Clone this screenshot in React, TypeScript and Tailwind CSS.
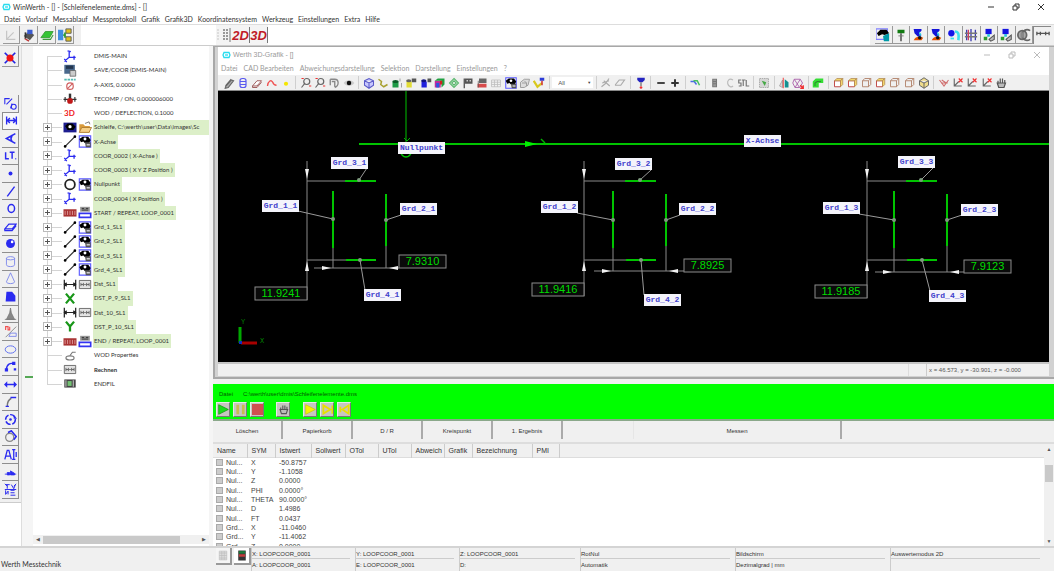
import type { ReactNode } from "react";

const BLUE = "#2a2af0";

const coor = (
  <g fill="none" stroke={BLUE} strokeWidth="1.6">
    <path d="M7 2v7l-6 5M7 9h8M5 1l4 1M13 7v5M1 11l3 4" />
  </g>
);

const camera = (
  <g>
    <path d="M1 1h14v14H1z" fill="none" stroke="#5a5aff" strokeWidth="1.4" />
    <path d="M1 5l4-3h7l3 4-2 4H8L6 8 3 9z" fill="#000" />
    <circle cx="8" cy="5" r="1.8" fill="#fff" />
    <path d="M8 9h7v6H9z" fill="#555" />
    <path d="M10 11h4v2h-4z" fill="#ccc" />
  </g>
);

const joystick = (
  <g>
    <path d="M3 1h9v2l-3 3 3 3-4 1-4-4z" fill="#1414d8" />
    <path d="M9 4l3 3-2 3z" fill="#26c6da" />
    <path d="M3 14c2-4 6-5 11-3l-2 3z" fill="#e65100" />
    <circle cx="10" cy="11" r="2" fill="#111" />
  </g>
);

const probe = (
  <g>
    <path d="M4 1h7v6H4z" fill="#1414e0" />
    <path d="M6 7h3v3H6z" fill="#26c6da" />
    <path d="M2 10h4v4H2z" fill="#2e9b2e" />
    <path d="M8 13l6-5v5l-4 2z" fill="#bbb" stroke="#555" strokeWidth="1.2" />
  </g>
);

const zoomLens = (
  <g fill="none" stroke="#666" strokeWidth="1.6">
    <circle cx="9" cy="6" r="4" />
    <path d="M6 9l-4 5" />
    <path d="M12 12h3M2 2h3" stroke="#e33" />
  </g>
);

const cubeFace = (
  <g fill="none" stroke="#b08068" strokeWidth="1.2">
    <path d="M2 5h8v8H2zM2 5l3-3h8v8l-3 3M10 5l3-3" />
  </g>
);

const axes = (
  <g fill="none">
    <path d="M3 2v10h10M3 12l6-6" stroke="#666" strokeWidth="1.5" />
    <path d="M9 2l5 5M14 2L9 7" stroke="#f03030" strokeWidth="1.5" />
  </g>
);

const repeatBox = (
  <g>
    <path d="M2 1h12v6H2z" fill="#999" />
    <path d="M4 3h3M9 3h3M4 5h8" stroke="#222" />
    <path d="M1 9h14v5H1z" fill="#fff" stroke="#3434f0" strokeWidth="2" />
  </g>
);

const measureBox = (
  <g fill="none" stroke="#555">
    <path d="M1 3h14v10H1z" fill="#e4e4e4" />
    <path d="M3 6v4M6 6v4M10 6v4M13 6v4M3 8h3M7 8h2M10 8h3" />
  </g>
);

const icons: Record<string, ReactNode> = {
  coor,
  camera,
  joystick,
  probe,
  zoomLens,
  cubeFace,
  axes,
  repeatBox,
  measureBox,
  save: (
    <g>
      <path d="M1 1h13v11H1z" fill="#49688c" />
      <path d="M3 2h9v4H3z" fill="#24364f" />
      <path d="M8 8h7v7H8z" fill="#ccc" stroke="#666" />
    </g>
  ),
  aAxis: (
    <g fill="none">
      <path d="M1 2h14" stroke="#52b8b0" strokeWidth="2.4" strokeDasharray="3 1" />
      <circle cx="8" cy="10" r="4" stroke="#d06060" strokeWidth="1.5" />
      <path d="M4 14l8-8" stroke="#d06060" strokeWidth="1.3" />
    </g>
  ),
  temp: (
    <g>
      <path d="M0 9h16M2 6v6M14 6v6" stroke="#333" strokeWidth="1.4" />
      <path d="M8 2v8" stroke="#333" strokeWidth="3" />
      <circle cx="8" cy="11" r="3.5" fill="#c01818" />
    </g>
  ),
  video: (
    <g>
      <path d="M0 2h16v12H0z" fill="#1d1d8f" />
      <path d="M2 6l3-3h6l4 4-3 4H5z" fill="#000" />
      <circle cx="8" cy="7" r="2" fill="#fff" />
    </g>
  ),
  folder: (
    <g>
      <path d="M1 4h5l2 2h6v8H1z" fill="#d99b3c" />
      <path d="M4 8h12l-3 6H1z" fill="#f6cf86" stroke="#a8752a" />
      <path d="M8 3l5-2 1 3" fill="none" stroke="#666" />
    </g>
  ),
  line: (
    <g>
      <path d="M2 14L14 2" stroke="#333" strokeWidth="1.6" />
      <circle cx="2" cy="14" r="1.6" />
      <circle cx="14" cy="2" r="1.6" />
    </g>
  ),
  ring: <circle cx="8" cy="8" r="6" fill="none" stroke="#222" strokeWidth="2.2" />,
  dmis: (
    <g>
      <path d="M0 4h16v9H0z" fill="#a83232" />
      <path d="M2 6v5M5 6v5M8 6v5M11 6v5M14 6v5" stroke="#e6a6a6" />
    </g>
  ),
  distance: (
    <g fill="none" stroke="#222" strokeWidth="1.5">
      <path d="M1 2v12M15 2v12M1 8h14M4 6L1 8l3 2M12 6l3 2-3 2" />
    </g>
  ),
  xAxis: <path d="M3 2l10 12M13 2L3 14" stroke="#189618" strokeWidth="2.8" />,
  yAxis: <path d="M3 2l5 6 5-6M8 8v6" fill="none" stroke="#189618" strokeWidth="2.8" />,
  props: (
    <g fill="none" stroke="#777" strokeWidth="1.4">
      <ellipse cx="8" cy="11" rx="5" ry="2.5" />
      <path d="M8 8l3-4h4" />
    </g>
  ),
  endfil: (
    <g>
      <path d="M1 3h14v10H1z" fill="#444" />
      <path d="M5 5h5v6H5z" fill="#73c273" />
      <path d="M3 4v8M12 4v8" stroke="#eee" />
    </g>
  ),
  cross: (
    <g>
      <path d="M2 2l12 12M14 2L2 14" stroke="#2323e0" strokeWidth="2" />
      <circle cx="8" cy="8" r="4" fill="#f01414" />
    </g>
  ),
  elements: (
    <g fill="none" stroke={BLUE} strokeWidth="1.3">
      <path d="M1 9V2h6M3 9l7-7M8 14l2-6" />
      <circle cx="12" cy="12" r="3" />
    </g>
  ),
  width: <path d="M2 3v10M14 3v10M2 8h12M6 5L3 8l3 3M10 5l3 3-3 3" fill="none" stroke={BLUE} strokeWidth="1.7" />,
  angle: <path d="M14 2L3 8l11 6M10 4c-2 3-2 5 0 8" fill="none" stroke={BLUE} strokeWidth="2" />,
  lt: (
    <g fill="none" stroke={BLUE} strokeWidth="1.8">
      <path d="M2 4v8h4M7 4h6M10 4v8M14 12h1" />
    </g>
  ),
  point: <circle cx="8" cy="8" r="2.4" fill={BLUE} />,
  slash: <path d="M4 14l9-12" stroke={BLUE} strokeWidth="1.8" />,
  oval: <ellipse cx="9" cy="8" rx="4" ry="5" fill="none" stroke={BLUE} strokeWidth="1.8" />,
  plane: <path d="M1 11l5-6h9l-5 6zM1 11v2h9l5-6" fill="none" stroke={BLUE} strokeWidth="1.4" />,
  sphere: (
    <g>
      <circle cx="8" cy="8" r="5.5" fill={BLUE} />
      <circle cx="10" cy="6" r="1.6" fill="#fff" />
    </g>
  ),
  cylinder: (
    <g fill="none" stroke="#6f7bea">
      <ellipse cx="8" cy="4" rx="5" ry="2" />
      <path d="M3 4v8c0 3 10 3 10 0V4" />
    </g>
  ),
  cone: <path d="M8 1L3 12c0 3 10 3 10 0z" fill="none" stroke="#6f7bea" />,
  contour: <path d="M3 2h7l4 5v7H2z" fill={BLUE} />,
  peak: <path d="M8 0l1 6 4 8H3l4-8zM1 14h14" fill="#888" stroke="#777" />,
  tolerance: (
    <g fill="none">
      <path d="M2 6V2h3v4h2V2" stroke="#f05050" strokeWidth="1.4" />
      <path d="M2 15L15 2" stroke="#777" />
      <path d="M8 10h7v4H6z" stroke="#6f7bea" />
    </g>
  ),
  ellipse: <ellipse cx="8" cy="8" rx="6.5" ry="4.5" fill="none" stroke="#6070ee" strokeWidth="1.2" />,
  arcPoints: (
    <g>
      <path d="M3 12C3 5 8 3 13 5" fill="none" stroke={BLUE} strokeWidth="1.6" />
      <path d="M1 10h4v4H1zM10 2h4v4h-4zM12 10h3v3h-3z" fill={BLUE} />
    </g>
  ),
  arrowH: <path d="M0 8l4-4v3h8V4l4 4-4 4V9H4v3z" fill={BLUE} />,
  arc: (
    <g fill="none" strokeWidth="1.8">
      <path d="M4 14C4 9 5 6 9 4" stroke="#777" />
      <path d="M8 3h7M2 14h4" stroke={BLUE} />
    </g>
  ),
  circleArrows: (
    <g>
      <circle cx="8" cy="8" r="6" fill="none" stroke={BLUE} strokeWidth="1.8" strokeDasharray="7 2" />
      <circle cx="8" cy="8" r="1.6" fill={BLUE} />
      <path d="M12 2l4 5h-4z" fill={BLUE} />
    </g>
  ),
  rotate: (
    <g fill="none" strokeWidth="1.6">
      <circle cx="7" cy="9" r="5" stroke="#888" />
      <path d="M5 3l4-2 6 7-3 4" stroke={BLUE} strokeWidth="2" />
    </g>
  ),
  textCursor: <path d="M1 14L4 3h2l3 11M2 10h6M12 2v12M10 2h4M10 14h4M15 5v6" fill="none" stroke={BLUE} strokeWidth="1.6" />,
  flatArrow: <path d="M1 10h14M4 8h3v3H4zM8 6l5 3v2H8z" fill={BLUE} stroke={BLUE} />,
  matrix: (
    <g fill="none" stroke={BLUE} strokeWidth="1.2">
      <path d="M2 2h5M4 2v5M9 2l3 5 2-5M2 9v5l3-4v4M8 9h5M8 12h5M8 15h6M1 8h14M1 1l3 3M15 1l-3 3" />
    </g>
  ),
  axisGrey: <path d="M3 3v10h10M3 13l8-8" fill="none" stroke="#c6c6c6" strokeWidth="1.4" />,
  machine: (
    <g>
      <path d="M2 9l6-5 6 4-5 6z" fill="#555" />
      <path d="M6 2h6v5H6z" fill="#3b5bd0" />
      <path d="M3 12l5 3" stroke="#b33" strokeWidth="1.6" />
      <path d="M4 5v7" stroke="#333" strokeWidth="2" />
    </g>
  ),
  greenPlane: (
    <g>
      <path d="M1 11L6 4h9l-4 7z" fill="#35c435" stroke="#3a9a3a" />
      <path d="M3 13h9l3-5" fill="none" stroke="#3a9a3a" strokeWidth="1.2" />
    </g>
  ),
  flow: (
    <g>
      <path d="M0 2h6v12H0z" fill="#3f8de0" />
      <path d="M9 1h6v5H9zM9 10h6v5H9z" fill="#e0c020" stroke="#555" />
      <path d="M6 8h3M8 5v6" stroke="#2c9b2c" strokeWidth="2" />
    </g>
  ),
  teleCam: (
    <g>
      <path d="M0 1h13v12H0z" fill="none" stroke="#8080ff" strokeWidth="1.4" />
      <path d="M1 6l4-4h7l3 4-5 2-3-1-4 2z" fill="#000" />
      <path d="M8 9l7-3v9H9z" fill="#009aa8" />
    </g>
  ),
  stylus: (
    <g>
      <path d="M4 2h8v4H4z" fill="#127a12" />
      <path d="M8 6v9" stroke="#444" strokeWidth="1.6" />
      <path d="M5 9h6" stroke="#777" />
    </g>
  ),
  drops: (
    <g>
      <circle cx="5" cy="6" r="3.6" fill="#1414e8" />
      <path d="M9 4c4 0 5 3 4 10" fill="none" stroke="#3fe0ee" strokeWidth="3" />
      <path d="M4 12h4" stroke="#3fe0ee" strokeWidth="2" />
    </g>
  ),
  hatch: (
    <g fill="none" strokeWidth="1.5">
      <path d="M3 2v12M8 1v14M13 2v12" stroke="#3b3bb0" />
      <path d="M1 6h14M1 10h14" stroke="#777" />
      <path d="M5 2v12" stroke="#d04060" />
    </g>
  ),
  lens: (
    <g fill="none" stroke="#666" strokeWidth="2">
      <circle cx="6" cy="8" r="5" fill="#aaa" />
      <path d="M15 3a6 6 0 100 10" />
      <path d="M6 5v6" stroke="#888" strokeWidth="4" />
    </g>
  ),
  gauge: <path d="M1 3v4M15 3v4M1 5h14M5 3v4M11 3v4" fill="none" stroke="#555" strokeWidth="1.5" />,
  clip: <path d="M3 13l8-9 3 1-7 9-4 1 1-4 7-8" fill="#aaa" stroke="#666" strokeWidth="1.6" />,
  spool: (
    <g fill="none" stroke="#5a5af0" strokeWidth="1.6">
      <rect x="4" y="2" width="8" height="12" rx="3" />
      <path d="M4 6h8M4 10h8" />
    </g>
  ),
  eraser: <path d="M2 12l6-7h6l-6 7zM2 12v2h6l6-7" fill="#fff" stroke="#985050" strokeWidth="1.2" />,
  redArc: <path d="M2 12c1-7 5-9 7-5 1 3 3 4 5 4" fill="none" stroke="#f05050" strokeWidth="1.8" />,
  yellowDot: <circle cx="8" cy="9" r="2.8" fill="#f5e600" />,
  undo: <path d="M3 3h6c6 0 6 9 0 11M5 6h4v7M3 3v8" fill="none" stroke="#888" strokeWidth="1.8" />,
  eye: (
    <g>
      <path d="M1 8c3-5 11-5 14 0-3 5-11 5-14 0z" fill="#ccc" />
      <circle cx="8" cy="8" r="3" fill="#111" />
    </g>
  ),
  cube: <path d="M2 5l6-3 6 3v6l-6 4-6-4zM2 5l6 3 6-3M8 8v7" fill="#c7c7ff" stroke="#5a5ac8" strokeWidth="1.4" />,
  path: <path d="M2 3l4 3-1 4 4 3 5-3" fill="none" stroke="#a8a030" strokeWidth="2" />,
  greenCan: (
    <g>
      <path d="M2 6h8v8H2z" fill="#1d9a45" />
      <ellipse cx="6" cy="6" rx="4" ry="2" fill="#0b5c27" />
      <path d="M12 2v4M14 8v6" stroke="#888" />
    </g>
  ),
  yellowCan: (
    <g>
      <path d="M2 6h7v8H2z" fill="#e2dc35" />
      <ellipse cx="5" cy="5" rx="3.5" ry="2" fill="#666" />
      <path d="M9 2h6v5H9z" fill="#555" />
    </g>
  ),
  blueCan: (
    <g>
      <path d="M2 6h7v8H2z" fill="#2020dd" />
      <ellipse cx="5" cy="5" rx="3.5" ry="2" fill="#111180" />
      <path d="M10 2h5v5h-5z" fill="#555" />
    </g>
  ),
  colorCube: (
    <g>
      <path d="M1 5h8v9H1z" fill="#c02a9c" />
      <path d="M3 8h4v6H3z" fill="#2a58e0" />
      <path d="M1 5l4-3h9l-4 3zM10 5l4-3v8l-4 4z" fill="#20a040" />
      <path d="M8 5h3v5H8z" fill="#d02020" />
    </g>
  ),
  diamond: <path d="M8 2l6 6-6 6-6-6zM5 8l3-3 3 3-3 3z" fill="none" stroke="#58b86c" strokeWidth="1.5" />,
  flag: (
    <g>
      <path d="M3 2v13" stroke="#444" strokeWidth="1.6" />
      <path d="M4 2h10v7H4z" fill="#555" />
      <path d="M6 4h2v2H6zM10 4h2v2h-2z" fill="#ccc" />
    </g>
  ),
  redLabel: (
    <g>
      <path d="M4 2h10v6H4z" fill="#666" />
      <path d="M2 9h12v5H2z" fill="#d84a4a" />
      <path d="M3 5v9" stroke="#555" />
    </g>
  ),
  grid: <path d="M2 4h12v9H2zM2 7h12M2 10h12M6 4v9M10 4v9" fill="none" stroke="#bcbcbc" />,
  cubeGrey: <path d="M2 7l5-4h7l-2 8-5 3H2zM4 8h6v4M7 5l3 3" fill="#ddd" stroke="#999" strokeWidth="1.2" />,
  colorProbe: (
    <g>
      <path d="M1 5l5 8 6-5" fill="none" stroke="#d8c81c" strokeWidth="3" />
      <path d="M9 1h6v4H9z" fill="#2c3cd8" />
      <path d="M12 5v6" stroke="#d03030" strokeWidth="2" />
    </g>
  ),
  brush: <path d="M2 13l5-4 5-7M5 5l8 7M3 8l9-3" fill="none" stroke="#aaa" strokeWidth="1.5" />,
  rubber: <path d="M2 10l5-6h7l-5 7H2z" fill="none" stroke="#aaa" strokeWidth="1.5" />,
  pin: (
    <g>
      <path d="M3 1h10v3l-3 3H6L3 4z" fill="#2424c0" />
      <path d="M8 7v5" stroke="#666" strokeWidth="1.6" />
      <circle cx="8" cy="14" r="1.8" fill="#f03030" />
    </g>
  ),
  minus: <path d="M3 8h10" stroke="#333" strokeWidth="2.4" />,
  plus: <path d="M3 8h10M8 3v10" stroke="#333" strokeWidth="2.6" />,
  wave: (
    <g fill="none" strokeWidth="2">
      <path d="M2 6h5l3 4" stroke="#4a68e8" />
      <path d="M6 5h5l3 6" stroke="#48c060" />
    </g>
  ),
  bolt: <path d="M5 3h5v10H5zM5 6h5M5 9h5" fill="#999" stroke="#777" strokeWidth="1.4" />,
  cShape: <path d="M12 4C7 1 4 5 5 9s5 5 7 3" fill="none" stroke="#bbb" strokeWidth="1.6" />,
  stl: <path d="M4 4H1v4h3v4H1M5 4h5M7 4v8M11 4v8h4" fill="none" stroke="#777" strokeWidth="1.6" />,
  select: (
    <g>
      <path d="M2 2h12v12H2z" fill="#d6d6d6" stroke="#999" strokeDasharray="2 1" />
      <path d="M5 5l6 2-2 5z" fill="#46a846" />
    </g>
  ),
  section: (
    <g>
      <path d="M2 12l4-8v10z" fill="#d8d8d8" stroke="#999" />
      <path d="M7 1v14" stroke="#f04a4a" strokeWidth="1.4" />
      <path d="M9 3l5 4v7H9z" fill="#149090" />
    </g>
  ),
  mesh: (
    <g fill="none">
      <path d="M3 3h8l3 5-4 6H4L1 8zM3 3l7 11M11 3L4 14" stroke="#aa60aa" strokeWidth="1.2" />
      <path d="M11 11l4 4M15 11v4h-4" stroke="#f03030" strokeWidth="1.8" />
    </g>
  ),
  greenPatch: (
    <g>
      <path d="M1 14V6l4-4h10v6H9v6z" fill="#35dd35" />
      <path d="M4 12V8l3-2h5" fill="none" stroke="#2f8a2f" strokeWidth="1.4" />
    </g>
  ),
  cubeYellow: (
    <g>
      <path d="M2 5h8v8H2z" fill="#fff" stroke="#c04848" strokeWidth="1.3" />
      <path d="M2 5l3-3h8l-3 3zM10 5l3-3v8l-3 3z" fill="#f2d66c" stroke="#b08850" />
    </g>
  ),
  cubeIso: <path d="M8 1l6 4v6l-6 4-6-4V5zM2 5l6 3 6-3M8 8v7" fill="#efdc8a" stroke="#666" strokeWidth="1.3" />,
  axesRed: <path d="M2 4l6 8 6-8M4 8h9M5 4l6 4" fill="none" stroke="#d07070" strokeWidth="1.5" />,
  hand: <path d="M4 9V5M7 8V2M10 8V2M13 9V4M3 8l2 6h7l2-6z" fill="#bbb" stroke="#555" strokeWidth="1.6" />,
  play: <path d="M1 1l14 7-14 7z" fill="#18e018" stroke="#0a900a" />,
  pause: <path d="M2 1h4v14H2zM10 1h4v14h-4z" fill="#c8bc50" />,
  stop: <path d="M0 0h16v16H0z" fill="#d05050" />,
  playYellow: <path d="M1 1l14 7-14 7z" fill="#f5f500" stroke="#c8c800" />,
  step: <path d="M2 2l10 6-10 6zM15 2v12" fill="none" stroke="#e8e000" strokeWidth="2.6" />,
  back: <path d="M14 2L5 8l9 6zM2 4v8" fill="none" stroke="#e8e000" strokeWidth="2.6" />,
  tabGrid: <path d="M2 1h12v14H2zM2 4h12M2 8h12M2 12h12M6 1v14M10 1v14" fill="#ddd" stroke="#bbb" />,
  traffic: (
    <g>
      <path d="M2 0h12v16H2z" fill="#333" />
      <path d="M3 1h10v4H3z" fill="#1a7a3a" />
      <path d="M3 6h10v4H3z" fill="#c23c3c" />
    </g>
  ),
  logo: (
    <g fill="none" stroke="#28dcee" strokeWidth="2.6">
      <path d="M3 3h10l2 5-2 5H3L1 8z" />
      <path d="M5 8h6" />
    </g>
  ),
};

function Icon({ name, className = "w-3 h-3" }: { name: string; className?: string }) {
  return (
    <svg viewBox="0 0 16 16" className={`shrink-0 ${className}`} aria-hidden="true">
      {icons[name]}
    </svg>
  );
}

const mainMenu = [
  "Datei", "Vorlauf", "Messablauf", "Messprotokoll", "Grafik", "Grafik3D",
  "Koordinatensystem", "Werkzeug", "Einstellungen", "Extra", "Hilfe",
];

const viewMenu = [
  "Datei", "CAD Bearbeiten", "Abweichungsdarstellung", "Selektion", "Darstellung", "Einstellungen", "?",
];

const leftTools = ["axisGrey", "machine", "greenPlane", "flow"];

const sensorTools = [
  "teleCam", "stylus", "joystick", "joystick", "drops", "hatch", "probe", "probe", "lens", "gauge",
];

const sideTools = [
  "elements", "width", "angle", "lt", "point", "slash", "oval", "plane", "sphere", "cylinder", "cone",
  "contour", "peak", "tolerance", "ellipse", "arcPoints", "arrowH", "arc", "circleArrows", "rotate",
  "textCursor", "flatArrow", "matrix",
];

const viewTools: string[][] = [
  ["clip", "spool", "eraser", "redArc", "yellowDot"],
  ["zoomLens", "zoomLens", "undo", "eye"],
  ["cube", "path", "greenCan", "yellowCan", "blueCan", "colorCube", "diamond", "flag", "redLabel", "grid", "camera", "cubeGrey", "colorProbe"],
  ["filter"],
  ["brush", "rubber"],
  ["pin"],
  ["minus", "plus"],
  ["wave"],
  ["bolt", "cShape", "stl"],
  ["select"],
  ["section", "mesh"],
  ["greenPatch"],
  ["cubeYellow", "cubeYellow", "cubeFace", "cubeYellow", "cubeFace", "cubeFace", "cubeIso"],
  ["axesRed", "axes", "axes", "axes", "hand"],
];

type TreeRow = { label: string; icon: string; icon2?: string; open?: boolean; bold?: boolean };

const tree: TreeRow[] = [
  { label: "DMIS-MAIN", icon: "coor" },
  { label: "SAVE/COOR (DMIS-MAIN)", icon: "save" },
  { label: "A-AXIS, 0.0000", icon: "aAxis" },
  { label: "TECOMP / ON, 0.000006000", icon: "temp" },
  { label: "WOD / DEFLECTION, 0.1000", icon: "3D" },
  { label: "Schleife, C:\\werth\\user\\Data\\images\\Sc", icon: "video", icon2: "folder", open: true },
  { label: "X-Achse", icon: "line", icon2: "camera", open: true },
  { label: "COOR_0002 ( X-Achse )", icon: "coor", open: true },
  { label: "COOR_0003 ( X Y Z Position )", icon: "coor", open: true },
  { label: "Nullpunkt", icon: "ring", icon2: "camera", open: true },
  { label: "COOR_0004 ( X Position )", icon: "coor", open: true },
  { label: "START / REPEAT, LOOP_0001", icon: "dmis", icon2: "repeatBox", open: true },
  { label: "Grd_1_SL1", icon: "line", icon2: "camera", open: true },
  { label: "Grd_2_SL1", icon: "line", icon2: "camera", open: true },
  { label: "Grd_3_SL1", icon: "line", icon2: "camera", open: true },
  { label: "Grd_4_SL1", icon: "line", icon2: "camera", open: true },
  { label: "Dst_SL1", icon: "distance", icon2: "measureBox", open: true },
  { label: "DST_P_9_SL1", icon: "xAxis", open: true },
  { label: "Dst_10_SL1", icon: "distance", icon2: "measureBox", open: true },
  { label: "DST_P_10_SL1", icon: "yAxis", open: true },
  { label: "END / REPEAT, LOOP_0001", icon: "dmis", icon2: "repeatBox", open: true },
  { label: "WOD Properties", icon: "props" },
  { label: "Rechnen", icon: "measureBox", bold: true },
  { label: "ENDFIL", icon: "endfil" },
];

const columns = [
  { name: "Name", width: "w-[34px]" },
  { name: "SYM", width: "w-[28px]" },
  { name: "Istwert", width: "w-[36px]" },
  { name: "Sollwert", width: "w-[34px]" },
  { name: "OTol", width: "w-[33px]" },
  { name: "UTol", width: "w-[33px]" },
  { name: "Abweich", width: "w-[33px]" },
  { name: "Grafik", width: "w-[28px]" },
  { name: "Bezeichnung", width: "w-[60px]" },
  { name: "PMI", width: "w-[27px]" },
];

const results = [
  ["Nul...", "X", "-50.8757"],
  ["Nul...", "Y", "-1.1058"],
  ["Nul...", "Z", "0.0000"],
  ["Nul...", "PHI", "0.0000°"],
  ["Nul...", "THETA", "90.0000°"],
  ["Nul...", "D", "1.4986"],
  ["Nul...", "FT", "0.0437"],
  ["Grd...", "X", "-11.0460"],
  ["Grd...", "Y", "-11.4062"],
  ["Grd...", "Z", "0.0000"],
];

const statusFields = [
  { width: "w-[104px]", top: "X: LOOPCOOR_0001", bottom: "A: LOOPCOOR_0001" },
  { width: "w-[104px]", top: "Y: LOOPCOOR_0001", bottom: "E: LOOPCOOR_0001" },
  { width: "w-[121px]", top: "Z: LOOPCOOR_0001", bottom: "D:" },
  { width: "w-[155px]", top: "RotNul", bottom: "Automatik" },
  { width: "w-[155px]", top: "Bildschirm", bottom: "Dezimalgrad | mm" },
  { width: "w-[155px]", top: "Auswertemodus 2D", bottom: "" },
];

type Point = [number, number];

type Part = {
  dimX: number;
  left: number;
  dimY: number;
  height: { x: number; y: number; value: string };
  widthBox: { x: number; y: number; value: string };
  labels: { text: string; at: Point; from: Point; to: Point }[];
};

const parts: Part[] = [
  {
    dimX: 89,
    left: 115,
    dimY: 177,
    height: { x: 37, y: 196, value: "11.9241" },
    widthBox: { x: 181, y: 164, value: "7.9310" },
    labels: [
      { text: "Grd_3_1", at: [113, 66], from: [149, 77], to: [141, 89] },
      { text: "Grd_1_1", at: [44, 109], from: [80, 120], to: [115, 128] },
      { text: "Grd_2_1", at: [182, 112], from: [183, 124], to: [168, 129] },
      { text: "Grd_4_1", at: [146, 198], from: [147, 199], to: [142, 169] },
    ],
  },
  {
    dimX: 366,
    left: 395,
    dimY: 180,
    height: { x: 314, y: 192, value: "11.9416" },
    widthBox: { x: 466, y: 168, value: "7.8925" },
    labels: [
      { text: "Grd_3_2", at: [397, 67], from: [433, 79], to: [422, 89] },
      { text: "Grd_1_2", at: [323, 110], from: [359, 122], to: [395, 129] },
      { text: "Grd_2_2", at: [461, 112], from: [462, 124], to: [448, 129] },
      { text: "Grd_4_2", at: [426, 203], from: [426, 204], to: [423, 169] },
    ],
  },
  {
    dimX: 649,
    left: 676,
    dimY: 181,
    height: { x: 597, y: 194, value: "11.9185" },
    widthBox: { x: 746, y: 169, value: "7.9123" },
    labels: [
      { text: "Grd_3_3", at: [680, 65], from: [716, 76], to: [703, 89] },
      { text: "Grd_1_3", at: [605, 111], from: [641, 123], to: [676, 129] },
      { text: "Grd_2_3", at: [743, 113], from: [744, 124], to: [729, 129] },
      { text: "Grd_4_3", at: [711, 199], from: [712, 200], to: [704, 169] },
    ],
  },
];

function Tag({ x, y, text, width = 37 }: { x: number; y: number; text: string; width?: number }) {
  return (
    <g>
      <rect x={x} y={y} width={width} height="12" fill="#f4f4fb" />
      <text
        x={x + width / 2}
        y={y + 8}
        textAnchor="middle"
        fill="#4040cc"
        className="font-['Liberation_Mono',monospace] text-[8px] font-bold"
      >
        {text}
      </text>
    </g>
  );
}

function ValueBox({ x, y, width, value }: { x: number; y: number; width: number; value: string }) {
  return (
    <g>
      <rect x={x} y={y} width={width} height="13" fill="#0a0a0a" stroke="#8c8c8c" />
      <text
        x={x + width / 2}
        y={y + 10}
        textAnchor="middle"
        fill="#00dc00"
        className="font-['Liberation_Sans',sans-serif] text-[11px]"
      >
        {value}
      </text>
    </g>
  );
}

function PartDrawing({ part }: { part: Part }) {
  const { dimX, left, dimY, height, widthBox, labels } = part;
  const right = left + 53;
  return (
    <g>
      <g stroke="#8a8a8a" fill="none">
        <path d={`M${dimX} 70V${height.y + 13}M${dimX} 90H${left + 15}M${dimX} 169H${left + 15}`} />
        <path d={`M${left} 157V${dimY}M${right} 155V${dimY}M${left - 19} ${dimY}H${widthBox.x}`} />
      </g>
      <g fill="#f2f2f2">
        <path d={`M${dimX - 2} 78h4l-2 10zM${dimX - 2} 180h4l-2-10z`} />
        <path d={`M${left - 11} ${dimY - 2}v4l9-2zM${right + 12} ${dimY - 2}v4l-9-2z`} />
      </g>
      <g stroke="#00c400" strokeWidth="2">
        <path d={`M${left + 12} 90h31M${left + 13} 169h30M${left} 100v57M${right} 103v52`} />
      </g>
      {labels.map((l) => (
        <g key={l.text}>
          <path d={`M${l.from[0]} ${l.from[1]}L${l.to[0]} ${l.to[1]}`} stroke="#9a9a9a" />
          <circle cx={l.to[0]} cy={l.to[1]} r="2" fill="#7d9a7d" />
          <Tag x={l.at[0]} y={l.at[1]} text={l.text} />
        </g>
      ))}
      <ValueBox x={height.x} y={height.y} width={52} value={height.value} />
      <ValueBox x={widthBox.x} y={widthBox.y} width={47} value={widthBox.value} />
    </g>
  );
}

function CadCanvas() {
  return (
    <svg className="block w-full flex-1 min-h-0 bg-black" role="img" aria-label="3D-Grafik">
      <path d="M188 0v52" stroke="#008000" strokeWidth="1.5" />
      <line x1="141" y1="53" x2="100%" y2="53" stroke="#00c400" strokeWidth="2" />
      <circle cx="188" cy="61" r="5" fill="none" stroke="#00c400" strokeWidth="1.5" />
      <path d="M186 47l3 3 3-3" stroke="#00b000" fill="none" />
      <path d="M307 50v6l12-3z" fill="#00f000" />
      <path d="M323 48l4 4" stroke="#00b000" strokeWidth="1.5" />
      <Tag x={180} y={51} width={47} text="Nullpunkt" />
      <Tag x={526} y={44} width={37} text="X-Achse" />
      {parts.map((p) => (
        <PartDrawing key={p.dimX} part={p} />
      ))}
      <path d="M22 252v-16" stroke="#00a800" strokeWidth="3" />
      <path d="M23 252h16" stroke="#a80000" strokeWidth="3" />
      <path d="M21 250h3v3h-3z" fill="#1030c0" />
      <g fill="#008000" className="font-['Liberation_Mono',monospace] text-[7px]">
        <text x="23" y="233">Y</text>
        <text x="42" y="252">X</text>
      </g>
    </svg>
  );
}

function WindowButtons({ className }: { className: string }) {
  return (
    <div className={`flex ${className}`}>
      <button aria-label="Minimieren" className="w-[25px] flex justify-center">
        <svg viewBox="0 0 8 8" className="w-2 h-2" stroke="currentColor"><path d="M1 4h6" /></svg>
      </button>
      <button aria-label="Wiederherstellen" className="w-[25px] flex justify-center">
        <svg viewBox="0 0 8 8" className="w-2 h-2" stroke="currentColor" fill="none"><path d="M1 3h4v4H1zM3 3V1h4v4H5" /></svg>
      </button>
      <button aria-label="Schließen" className="w-[25px] flex justify-center">
        <svg viewBox="0 0 8 8" className="w-2 h-2" stroke="currentColor"><path d="M1 1l6 6M7 1L1 7" /></svg>
      </button>
    </div>
  );
}

function TreeItem({ row, first, last }: { row: TreeRow; first: boolean; last: boolean }) {
  return (
    <li className="flex flex-1 items-center min-h-0">
      <div className="relative w-[19px] self-stretch flex items-center shrink-0">
        <div
          className={`absolute left-[4px] border-l border-[#d4d4d4] ${first ? "top-1/2" : "top-0"} ${last ? "bottom-1/2" : "bottom-0"}`}
        />
        <div className="absolute left-[4px] right-0 top-1/2 border-t border-[#d4d4d4]" />
        {row.open && (
          <button
            aria-label={`${row.label} aufklappen`}
            className="relative w-[9px] h-[9px] border border-[#bbb] bg-white flex items-center justify-center"
          >
            <svg viewBox="0 0 5 5" className="w-[5px] h-[5px]" stroke="#555"><path d="M0 2.5h5M2.5 0v5" /></svg>
          </button>
        )}
      </div>
      <div className="flex items-center w-[31px] shrink-0 pl-px gap-px">
        {row.icon === "3D" ? (
          <span className="text-[8px] font-bold text-[#f02020] pl-px">3D</span>
        ) : (
          <Icon name={row.icon} className="w-[14px] h-[13px]" />
        )}
        {row.icon2 && <Icon name={row.icon2} className="w-[14px] h-[13px]" />}
      </div>
      <span
        className={`self-stretch flex items-center pl-px pr-[2px] whitespace-nowrap ${row.open ? "bg-[#dcefc8]" : ""} ${row.bold ? "font-bold" : ""} ${row.icon2 === "folder" ? "flex-1" : ""}`}
      >
        {row.label}
      </span>
    </li>
  );
}

function ProgramTree() {
  return (
    <div className="flex flex-1 min-w-0 bg-[#f5f5f5] border-l border-[#ddd]">
      <div className="w-[11px] shrink-0 pt-[330px] pl-[3px]">
        <div className="h-[2px] bg-[#56a856]" />
      </div>
      <div className="flex flex-col flex-1 min-w-0 bg-white mr-1">
        <ul className="flex flex-col h-[342px] mt-[3px] pl-[10px] overflow-hidden text-[6px]">
          {tree.map((row, i) => (
            <TreeItem key={row.label} row={row} first={i === 0} last={i === tree.length - 1} />
          ))}
        </ul>
        <div className="mt-auto mb-[2px] h-[9px] flex items-center bg-[#f0f0f0] text-[5px] text-[#555]">
          <span className="w-[10px] text-center">◀</span>
          <div className="flex-1 h-[8px]">
            <div className="h-full w-[88%] bg-[#c9c9c9]" />
          </div>
          <span className="w-[10px] text-center">▶</span>
        </div>
      </div>
    </div>
  );
}

function SideToolbar() {
  return (
    <div className="w-[21px] shrink-0 bg-white">
      <div className="h-[457px] bg-[#f0f0f0] pl-[2px] pr-[2px] flex flex-col border-b border-[#ccc]">
        <button aria-label="cross" className="h-[21px] pt-1 flex items-center justify-center border-r border-b border-[#999]">
          <Icon name="cross" className="w-[14px] h-[14px]" />
        </button>
        <div className="h-[28px]" />
        <div className="flex flex-col h-[404px]">
          {sideTools.map((name) => (
            <button
              key={name}
              aria-label={name}
              className={`flex-1 min-h-0 flex items-center justify-center border-b border-[#8e8e8e] ${
                name === "width" ? "border-l bg-[#f8f8f8]" : "border-r"
              }`}
            >
              <Icon name={name} className="w-[13px] h-[13px]" />
            </button>
          ))}
        </div>
      </div>
    </div>
  );
}

function ViewToolbar() {
  return (
    <div className="h-[16px] bg-[#f0f0f0] border-b border-[#888] pl-1">
      <div className="flex items-center h-full w-[786px]">
        {viewTools.map((group, g) => (
          <div key={g} className="contents">
            {g > 0 && (
              <div className="w-[6px] h-[13px] shrink-0 flex justify-center">
                <div className="border-l border-[#cfcfcf]" />
              </div>
            )}
            {group.map((name, i) =>
              name === "filter" ? (
                <label key={name} className="relative w-[41px] h-[11px] shrink-0 bg-white flex items-center">
                  <select aria-label="Filter" className="appearance-none w-full pl-[6px] text-[6px] leading-[10px] text-[#555]">
                    <option>All</option>
                  </select>
                  <span className="absolute right-0 px-[2px] text-[4px] text-[#444] pointer-events-none">▼</span>
                </label>
              ) : (
                <button key={i} aria-label={name} className="flex-1 min-w-0 flex justify-center">
                  <Icon name={name} />
                </button>
              )
            )}
          </div>
        ))}
      </div>
    </div>
  );
}

function GraphicWindow() {
  return (
    <section className="flex flex-col flex-1 min-h-0 border-t border-l-2 border-b-2 border-[#a8a8a8] bg-[#d2d2d2] pl-[3px] pr-[5px] pb-px">
      <div className="h-[15px] bg-white flex items-center pl-1 text-[#9a9a9a]">
        <Icon name="logo" className="w-[9px] h-[8px]" />
        <h2 className="ml-[2px]">Werth 3D-Grafik - []</h2>
        <WindowButtons className="ml-auto text-[#bbb]" />
      </div>
      <nav className="h-[13px] bg-white flex items-center gap-[6px] pl-[3px] font-['Lato',sans-serif] text-[#999]">
        {viewMenu.map((item) => (
          <button key={item}>{item}</button>
        ))}
      </nav>
      <ViewToolbar />
      <CadCanvas />
      <div className="h-[14px] border-t-2 border-[#c4c4c4] bg-[#f0f0f0] flex items-center justify-end text-[6px] text-[#555]">
        <div className="w-[18px] self-stretch border-l border-[#ddd]" />
        <div className="w-[123px] self-stretch border-l border-[#ccc] pl-[2px] flex items-center whitespace-nowrap">
          x = 46.573, y = -30.901, z = -0.000
        </div>
      </div>
    </section>
  );
}

function RunButton({ name, className = "" }: { name: string; className?: string }) {
  return (
    <button
      aria-label={name}
      className={`w-[14px] h-[15px] bg-[#c6c6c0] border border-t-[#e8e8e8] border-l-[#e8e8e8] border-r-[#777] border-b-[#777] flex items-center justify-center ${className}`}
    >
      <Icon name={name} className="w-[11px] h-[11px]" />
    </button>
  );
}

function RunPanel() {
  return (
    <div className="h-[37px] bg-[#00ff00] border-b-2 border-[#8aa88a] pt-[6px] pl-[3px] text-[6px] text-[#006000]">
      <div className="flex leading-[8px] pl-[3px]">
        <span className="w-[24px]">Datei</span>
        <span>C:\werth\user\dmis\Schleifenelemente.dms</span>
      </div>
      <div className="flex gap-[3px] mt-[4px]">
        <RunButton name="play" />
        <RunButton name="pause" />
        <RunButton name="stop" />
        <RunButton name="hand" className="ml-[9px] mr-[10px]" />
        <RunButton name="playYellow" />
        <RunButton name="step" />
        <RunButton name="back" />
      </div>
    </div>
  );
}

function ActionRow() {
  return (
    <div className="h-[18px] flex bg-[#f0f0f0] text-[6px]">
      {["Löschen", "Papierkorb", "D / R", "Kreispunkt", "1. Ergebnis"].map((label) => (
        <button key={label} className="w-[70px] shrink-0 pt-[2px] border-r-2 border-[#aaa]">
          {label}
        </button>
      ))}
      <div className="w-[71px] border-r border-[#e6e6e6]" />
      <button className="w-[208px] pt-[2px] border-r-2 border-[#aaa]">Messen</button>
    </div>
  );
}

function ResultTable() {
  return (
    <div className="h-[104px] flex border-t-2 border-[#ddd] bg-white">
      <div className="flex-1 min-w-0 overflow-hidden text-[7px] leading-[9px]">
        <table className="table-fixed w-full border-collapse h-[107px]">
          <thead>
            <tr className="h-[13px] bg-[#f0f0f0] border-b border-[#ddd]">
              {columns.map((c) => (
                <th key={c.name} className={`${c.width} pl-1 text-left font-normal border-r border-[#ccc]`}>
                  {c.name}
                </th>
              ))}
              <th />
            </tr>
          </thead>
          <tbody>
            {results.map((r, i) => (
              <tr key={i} className="text-[#444]">
                <td className="pl-[3px]">
                  <div className="flex items-center gap-[3px]">
                    <span className="w-[7px] h-[7px] bg-[#ccc] border border-[#aaa]" />
                    {r[0]}
                  </div>
                </td>
                <td className="pl-1">{r[1]}</td>
                <td className="pl-1">{r[2]}</td>
                <td colSpan={8} />
              </tr>
            ))}
          </tbody>
        </table>
      </div>
      <div className="w-[10px] bg-[#f0f0f0] flex flex-col items-center text-[5px] text-[#555]">
        <span className="h-[21px] pt-[3px]">▲</span>
        <div className="w-[8px] h-[17px] bg-[#c9c9c9]" />
        <span className="mt-auto pb-[2px]">▼</span>
      </div>
    </div>
  );
}

function StatusBar() {
  return (
    <footer className="h-[25px] shrink-0 flex bg-[#f0f0f0] border-t-2 border-[#d4d4d4]">
      <div className="w-[216px] shrink-0 flex items-end pl-px pb-[3px] font-['Lato',sans-serif]">Werth Messtechnik</div>
      <div className="w-[35px] shrink-0 flex gap-[2px]">
        <button aria-label="Tabelle" className="w-[16px] h-[17px] border-r-2 border-b-2 border-[#999] bg-[#f5f5f5] flex items-center justify-center">
          <Icon name="tabGrid" className="w-[10px] h-[11px]" />
        </button>
        <button aria-label="Ampel" className="w-[17px] h-[17px] border-r-2 border-b-2 border-[#999] bg-white flex items-center justify-center">
          <Icon name="traffic" className="w-[10px] h-[11px]" />
        </button>
      </div>
      {statusFields.map((f) => (
        <div key={f.top} className={`${f.width} shrink-0 pr-[5px] text-[6px]`}>
          <div className="h-[11px] pt-[2px] flex items-center border-l border-b border-[#ccc]">{f.top}</div>
          <div className="h-[12px] flex items-center border-l border-[#ccc]">{f.bottom}</div>
        </div>
      ))}
    </footer>
  );
}

export default function App() {
  return (
    <div className="h-screen flex flex-col overflow-hidden bg-[#f0f0f0] font-['Liberation_Sans',sans-serif] text-[7px] leading-none text-[#333]">
      <header className="shrink-0 bg-white font-['Lato',sans-serif]">
        <div className="h-[14px] flex items-center pl-[2px]">
          <Icon name="logo" className="w-[9px] h-[8px]" />
          <h1 className="ml-[2px]">WinWerth - [] - [Schleifenelemente.dms] - []</h1>
          <WindowButtons className="ml-auto text-[#333] mr-px" />
        </div>
        <nav className="h-[11px] flex items-center gap-[5px] pl-1 border-b border-[#ddd]">
          {mainMenu.map((item) => (
            <button key={item}>{item}</button>
          ))}
        </nav>
      </header>

      <div className="h-[21px] shrink-0 flex bg-white border-b border-[#ccc]">
        <div className="flex bg-[#f0f0f0] pl-[3px] pt-px pr-[6px]">
          {leftTools.map((name) => (
            <button key={name} aria-label={name} className="w-[17px] h-[18px] mr-px flex items-center justify-center border-r border-b border-[#999]">
              <Icon name={name} className="w-[14px] h-[14px]" />
            </button>
          ))}
        </div>
        <div className="w-[135px]" />
        <div className="flex items-center pl-px bg-[#f4f4f4]">
          <svg viewBox="0 0 14 14" className="w-[14px] h-[14px] mr-px" aria-hidden="true">
            <path d="M1 1v12" stroke="#ddd" strokeWidth="2" strokeDasharray="2 1" />
            <path d="M7 1v12M10 1v12" stroke="#999" strokeWidth="2" strokeDasharray="2 1" />
            <path d="M13 0v14" stroke="#777" />
          </svg>
          {["2D", "3D"].map((mode) => (
            <button key={mode} className="w-[18px] h-[16px] border-r border-[#777] text-[13px] font-bold italic text-[#c01c28]">
              {mode}
            </button>
          ))}
        </div>
        <div className="ml-auto w-[184px] flex bg-[#f0f0f0] pl-[5px] pr-[3px] pt-px">
          {sensorTools.map((name, i) => (
            <button
              key={i}
              aria-label={name}
              className={`flex-1 h-[18px] flex items-center justify-center ${
                name === "gauge" ? "border-l border-t border-[#888]" : "border-r border-b border-[#999]"
              }`}
            >
              <Icon name={name} className="w-[14px] h-[14px]" />
            </button>
          ))}
        </div>
      </div>

      <main className="flex flex-1 min-h-0">
        <aside className="w-[213px] shrink-0 flex font-['Lato',sans-serif]">
          <SideToolbar />
          <ProgramTree />
        </aside>
        <div className="flex flex-col flex-1 min-w-0">
          <GraphicWindow />
          <div className="h-[5px] shrink-0" />
          <RunPanel />
          <ActionRow />
          <div className="h-[3px] shrink-0" />
          <ResultTable />
        </div>
      </main>
      <StatusBar />
    </div>
  );
}
